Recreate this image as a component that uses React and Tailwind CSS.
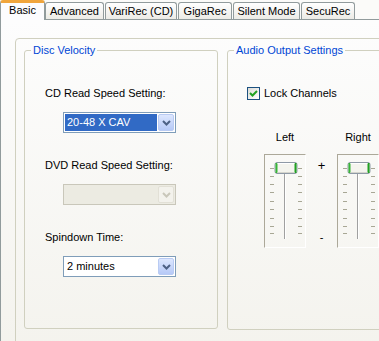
import React from "react";

function Chevron({ disabled }) {
  return (
    <svg width="9" height="6" viewBox="0 0 9 6">
      <path
        d="M1 1 L4.5 4.5 L8 1"
        fill="none"
        stroke={disabled ? "#c9c7ba" : "#4d6185"}
        strokeWidth="2"
      />
    </svg>
  );
}

function Combo({ value, selected, disabled }) {
  return (
    <div
      className={
        disabled
          ? "flex h-[21px] w-[113px] border border-[#c9c7ba] bg-[#ecebe2]"
          : "flex h-[21px] w-[113px] border border-[#7f9db9] bg-white"
      }
    >
      <div className="flex flex-1 items-stretch p-[1px]">
        {value ? (
          <div
            className={
              selected
                ? "flex flex-1 items-center bg-[#316ac5] pl-[2px] text-white"
                : "flex flex-1 items-center pl-[2px] text-black"
            }
          >
            {value}
          </div>
        ) : null}
      </div>
      <div
        className={
          disabled
            ? "my-[1px] mr-[1px] flex w-[16px] items-center justify-center rounded-[2px] border border-[#e2e0d6] bg-[#f3f2ec]"
            : "my-[1px] mr-[1px] flex w-[16px] items-center justify-center rounded-[2px] border border-[#b9cbf3] bg-linear-to-b from-[#dde7fe] to-[#b6c9f7]"
        }
      >
        <Chevron disabled={disabled} />
      </div>
    </div>
  );
}

function SliderBox() {
  const ticks = [14, 22, 30, 38, 47, 55, 64, 72, 79];
  return (
    <div className="h-[94px] w-[42px] border-t border-l border-[#aca899] border-r border-r-white border-b border-b-white">
      <svg width="40" height="92" viewBox="0 0 40 92" className="block">
        {ticks.map((y) => (
          <g key={y}>
            <rect x="5" y={y - 1} width="4" height="1" fill="#a8a795" />
            <rect x="33" y={y - 1} width="4" height="1" fill="#a8a795" />
          </g>
        ))}
        <rect x="19" y="8" width="1" height="76" fill="#a0a0a0" />
        <rect x="20" y="8" width="1" height="76" fill="#ffffff" />
        <rect x="10" y="7.5" width="22" height="11" rx="2" fill="#f4f4ee" stroke="#8e99a6" />
        <rect x="10.5" y="8" width="2" height="10" fill="#37b537" />
        <rect x="29.5" y="8" width="2" height="10" fill="#21a121" />
        <rect x="12.5" y="8" width="17" height="1" fill="#ffffff" />
        <rect x="12.5" y="17" width="17" height="1" fill="#d5d5cd" />
      </svg>
    </div>
  );
}

export default function App() {
  const tabs = [
    ["Advanced", 59],
    ["VariRec (CD)", 72],
    ["GigaRec", 54],
    ["Silent Mode", 67],
    ["SecuRec", 54],
  ];
  return (
    <div className="flex h-[341px] w-[379px] flex-col overflow-hidden bg-[#fbfbf9] font-[family-name:'Liberation_Sans',Arial,sans-serif] text-[11px] leading-[13px] text-black">
      <div className="flex h-[20px] shrink-0 items-end border-b border-[#919b9c]">
        <div className="relative z-10 -mb-px flex h-[20px] w-[45px] shrink-0 items-start justify-center rounded-t-[3px] border-x border-[#919b9c] border-t-[3px] border-t-[#f0a53c] bg-[#fcfcfe] pt-[1px]">
          Basic
        </div>
        <div className="flex gap-[1px]">
          {tabs.map(([t, w]) => (
            <div
              key={t}
              style={{ width: w }}
              className="flex h-[17px] shrink-0 items-center justify-center rounded-t-[3px] border-x border-t border-[#919b9c] bg-linear-to-b from-[#ffffff] to-[#ecebe6] pt-[1px]"
            >
              {t}
            </div>
          ))}
        </div>
      </div>
      <div className="flex-1 border-l border-[#919b9c] bg-linear-to-b from-[#fdfdfd] to-[#f3f2ec]">
        <div className="ml-[14px] mt-[18px] h-[340px] w-[420px] rounded-[4px] border border-[#d0d0bf] px-[8px]">
          <div className="mt-[5px] flex gap-[9px]">
            <fieldset className="h-[285px] w-[194px] shrink-0 rounded-[3px] border border-[#d0d0bf]">
              <legend className="ml-[6px] px-[2px] text-[#0046d5]">Disc Velocity</legend>
              <div className="pl-[20px]">
                <div className="mt-[30px]">CD Read Speed Setting:</div>
                <div className="ml-[18px] mt-[12px]">
                  <Combo value="20-48 X CAV" selected />
                </div>
                <div className="mt-[26px]">DVD Read Speed Setting:</div>
                <div className="ml-[18px] mt-[12px]">
                  <Combo disabled />
                </div>
                <div className="mt-[26px]">Spindown Time:</div>
                <div className="ml-[18px] mt-[12px]">
                  <Combo value="2 minutes" />
                </div>
              </div>
            </fieldset>
            <fieldset className="h-[286px] w-[200px] shrink-0 rounded-[3px] border border-[#d0d0bf]">
              <legend className="ml-[6px] px-[2px] text-[#0046d5]">Audio Output Settings</legend>
              <div className="pl-[19px]">
                <div className="mt-[30px] flex items-center gap-[4px]">
                  <div className="flex h-[13px] w-[13px] items-center justify-center border border-[#1c5180] bg-linear-to-br from-[#dcdcd7] to-white">
                    <svg width="9" height="9" viewBox="0 0 9 9">
                      <path d="M1 4 L3.5 6.5 L8 2" fill="none" stroke="#21a121" strokeWidth="2" />
                    </svg>
                  </div>
                  <span>Lock Channels</span>
                </div>
                <div className="ml-[17px] mt-[31px] grid grid-cols-[42px_31px_42px] gap-y-[10px]">
                  <div className="text-center">Left</div>
                  <div />
                  <div className="text-center">Right</div>
                  <SliderBox />
                  <div className="relative">
                    <span className="absolute left-0 right-0 top-[5px] text-center text-[13px] leading-[13px]">+</span>
                    <span className="absolute left-0 right-0 top-[77px] text-center">-</span>
                  </div>
                  <SliderBox />
                </div>
              </div>
            </fieldset>
          </div>
        </div>
      </div>
    </div>
  );
}
